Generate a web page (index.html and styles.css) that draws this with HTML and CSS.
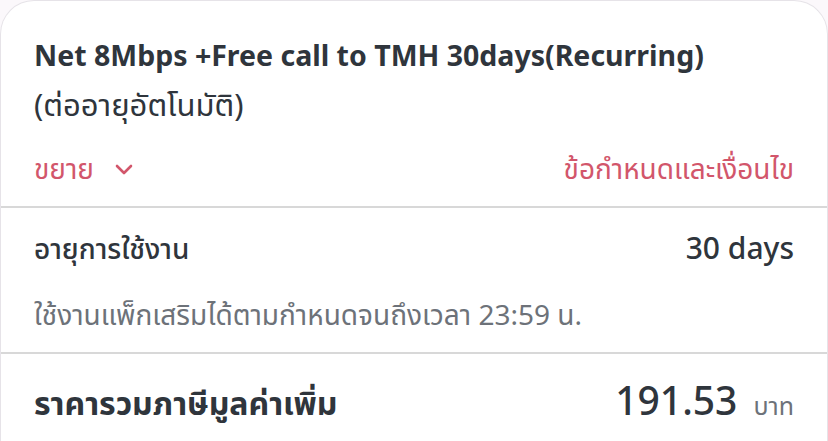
FILE: index.html
```html
<!DOCTYPE html>
<html lang="th">
<head>
  <meta charset="UTF-8">
  <meta name="viewport" content="width=device-width, initial-scale=1.0">
  <title>Package</title>
  <link rel="stylesheet" href="styles.css">
</head>
<body>
  <div class="card">
    <section class="head">
      <h1 class="title">Net 8Mbps +Free call to TMH 30days(Recurring)</h1>
      <p class="sub">(ต่ออายุอัตโนมัติ)</p>
      <div class="links">
        <a href="#" class="expand">ขยาย
          <svg width="20" height="12" viewBox="0 0 20 12"><path d="M3 2 L10 9 L17 2" fill="none" stroke="currentColor" stroke-width="2.6" stroke-linecap="round" stroke-linejoin="round"/></svg>
        </a>
        <a href="#">ข้อกำหนดและเงื่อนไข</a>
      </div>
    </section>

    <section class="usage">
      <div class="row">
        <span class="label">อายุการใช้งาน</span>
        <span class="value">30 days</span>
      </div>
      <p class="note">ใช้งานแพ็กเสริมได้ตามกำหนดจนถึงเวลา 23:59 น.</p>
    </section>

    <section class="total">
      <span class="total-label">ราคารวมภาษีมูลค่าเพิ่ม</span>
      <span class="price">191.53 <small>บาท</small></span>
    </section>
  </div>
</body>
</html>
```

FILE: styles.css
```css
body {
  margin: 0;
  font-family: "Noto Sans", "Noto Sans Thai", sans-serif;
  background-color: #fbf8fb;
  color: #2f353c;
}

.card {
  background: white;
  border: 1px solid #e6e3e8;
  border-bottom: none;
  border-radius: 34px 34px 0 0;
  min-height: 441px;
  box-sizing: border-box;
}

.head {
  padding: 34px 33px 20px;
  border-bottom: 2px solid #d8d8d8;
}

.title {
  margin: 0;
  font-size: 28.5px;
  font-weight: 700;
  line-height: 40px;
  white-space: nowrap;
}

.sub {
  margin: 0;
  font-size: 31px;
  line-height: 58px;
}

.links {
  display: flex;
  justify-content: space-between;
  margin-top: 17px;
}

.links a {
  color: #d2566b;
  text-decoration: none;
  font-size: 28px;
  line-height: 36px;
}

.expand svg {
  margin-left: 13px;
  vertical-align: 3px;
}

.usage {
  padding: 20px 33px 18px;
  border-bottom: 2px solid #d8d8d8;
}

.row {
  display: flex;
  justify-content: space-between;
  align-items: baseline;
  line-height: 40px;
}

.label {
  font-size: 28px;
  font-weight: 500;
}

.value {
  font-size: 30px;
  font-weight: 500;
}

.note {
  margin: 26px 0 0;
  font-size: 28px;
  line-height: 40px;
  color: #6d7279;
}

.total {
  display: flex;
  justify-content: space-between;
  align-items: baseline;
  padding: 22px 33px;
  line-height: 48px;
}

.total-label {
  font-size: 32px;
  font-weight: 700;
}

.price {
  font-size: 39px;
  font-weight: 500;
}

.price small {
  font-size: 25px;
  font-weight: 400;
  color: #6d7279;
  margin-left: 6px;
}
```
